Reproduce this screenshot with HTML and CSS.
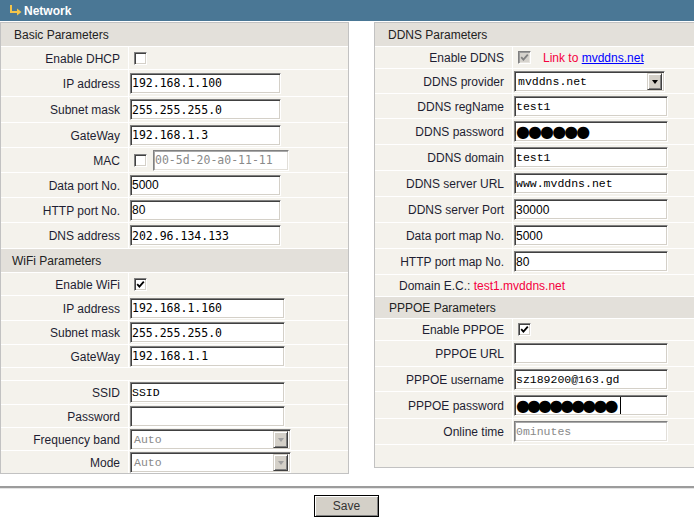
FILE: index.html
```html
<!DOCTYPE html>
<html>
<head>
<meta charset="utf-8">
<title>Network</title>
<link rel="stylesheet" href="styles.css">
</head>
<body>
<div class="titlebar">
  <svg class="ico" width="12" height="11" viewBox="0 0 12 11"><rect x="0" y="0" width="2" height="8" fill="#f3c44a"/><rect x="0" y="6" width="8" height="2" fill="#f3c44a"/><polygon points="7,3.5 11.5,7 7,10.5" fill="#f3c44a"/></svg>
  <span>Network</span>
</div>
<div class="panels">
  <section class="panel left">
    <div class="sec">Basic Parameters</div>
    <div class="lbl">Enable DHCP</div><div class="val"><span class="cb"></span></div>
    <div class="lbl">IP address</div><div class="val"><input class="tx w151 num" value="192.168.1.100"></div>
    <div class="lbl">Subnet mask</div><div class="val"><input class="tx w151 num" value="255.255.255.0"></div>
    <div class="lbl">GateWay</div><div class="val"><input class="tx w151 num" value="192.168.1.3"></div>
    <div class="lbl">MAC</div><div class="val"><span class="cb"></span><input class="tx w136 num dis mac" value="00-5d-20-a0-11-11" disabled></div>
    <div class="lbl">Data port No.</div><div class="val"><input class="tx w151 sans" value="5000"></div>
    <div class="lbl">HTTP port No.</div><div class="val"><input class="tx w151 sans" value="80"></div>
    <div class="lbl">DNS address</div><div class="val"><input class="tx w151 num" value="202.96.134.133"></div>
    <div class="sec sec2">WiFi Parameters</div>
    <div class="lbl">Enable WiFi</div><div class="val"><span class="cb on"><svg width="9" height="9" viewBox="0 0 9 9"><path d="M1.2 4.2 L3.4 6.6 L7.8 1.6" stroke="#000" stroke-width="1.8" fill="none"/></svg></span></div>
    <div class="lbl">IP address</div><div class="val"><input class="tx w155 num" value="192.168.1.160"></div>
    <div class="lbl">Subnet mask</div><div class="val"><input class="tx w155 num" value="255.255.255.0"></div>
    <div class="lbl">GateWay</div><div class="val"><input class="tx w155 num" value="192.168.1.1"></div>
    <div class="blank"></div>
    <div class="lbl">SSID</div><div class="val"><input class="tx w155 mono" value="SSID"></div>
    <div class="lbl">Password</div><div class="val"><input class="tx w155 mono" value=""></div>
    <div class="lbl">Frequency band</div><div class="val"><div class="combo w161 dis"><span class="ctext">Auto</span><span class="arr"><span class="tri"></span></span></div></div>
    <div class="lbl">Mode</div><div class="val"><div class="combo w161 dis"><span class="ctext">Auto</span><span class="arr"><span class="tri"></span></span></div></div>
  </section>
  <section class="panel right">
    <div class="sec">DDNS Parameters</div>
    <div class="lbl">Enable DDNS</div><div class="val"><span class="cb on dis"><svg width="9" height="9" viewBox="0 0 9 9"><path d="M1.2 4.2 L3.4 6.6 L7.8 1.6" stroke="#808080" stroke-width="1.8" fill="none"/></svg></span><span class="linkto">Link to <a href="#">mvddns.net</a></span></div>
    <div class="lbl">DDNS provider</div><div class="val"><div class="combo w151"><span class="ctext">mvddns.net</span><span class="arr"><span class="tri"></span></span></div></div>
    <div class="lbl">DDNS regName</div><div class="val"><input class="tx w154 mono" value="test1"></div>
    <div class="lbl">DDNS password</div><div class="val"><div class="tx fld w154 pw pw6">●●●●●●</div></div>
    <div class="lbl">DDNS domain</div><div class="val"><input class="tx w154 mono" value="test1"></div>
    <div class="lbl">DDNS server URL</div><div class="val"><input class="tx w154 mono" value="www.mvddns.net"></div>
    <div class="lbl">DDNS server Port</div><div class="val"><input class="tx w154 sans" value="30000"></div>
    <div class="lbl">Data port map No.</div><div class="val"><input class="tx w154 sans" value="5000"></div>
    <div class="lbl">HTTP port map No.</div><div class="val"><input class="tx w154 sans" value="80"></div>
    <div class="wide">Domain E.C.: <span class="red">test1.mvddns.net</span></div>
    <div class="sec sec3">PPPOE Parameters</div>
    <div class="lbl">Enable PPPOE</div><div class="val"><span class="cb on"><svg width="9" height="9" viewBox="0 0 9 9"><path d="M1.2 4.2 L3.4 6.6 L7.8 1.6" stroke="#000" stroke-width="1.8" fill="none"/></svg></span></div>
    <div class="lbl">PPPOE URL</div><div class="val"><input class="tx w154 mono" value=""></div>
    <div class="lbl">PPPOE username</div><div class="val"><input class="tx w154 mono" value="sz189200@163.gd"></div>
    <div class="lbl">PPPOE password</div><div class="val"><div class="tx fld w154 pw pw9">●●●●●●●●●<span class="caret"></span></div></div>
    <div class="lbl">Online time</div><div class="val"><input class="tx w154 mono dis" value="0minutes" disabled></div>
    <div class="blank"></div>
  </section>
</div>
<div class="rule"></div>
<div class="actions"><button class="btn" type="button">Save</button></div>
</body>
</html>
```

FILE: styles.css
```css
html, body {
  margin: 0;
  padding: 0;
  overflow: hidden;
  background: #fff;
}
body {
  width: 694px;
  height: 521px;
  font-family: "Liberation Sans", Arial, sans-serif;
  font-size: 12px;
  color: #1e1e32;
}
.titlebar {
  height: 21px;
  margin-bottom: 1px;
  background: #4a7795;
  color: #fff;
  font-weight: bold;
  font-size: 12px;
  display: flex;
  align-items: center;
  gap: 2px;
  padding-left: 10px;
}
.ico { display: block; }
.panels {
  display: flex;
  align-items: flex-start;
  gap: 25px;
}
.panel {
  display: grid;
  gap: 1px;
  background: #fff;
  border: 1px solid #c2c2c2;
  box-sizing: border-box;
}
.left {
  width: 349px;
  grid-template-columns: 127px 1fr;
  grid-template-rows: 23px 22px 26px 25px 24px 24px 24px 24px 25px 23px 22px 24px 23px 22px 12px 23px 22px 22px 22px;
}
.right {
  width: 320px;
  border-right: 0;
  grid-template-columns: 137px 1fr;
  grid-template-rows: 23px 21px 24px 24px 25px 25px 25px 25px 25px 25px 21px 21px 21px 25px 24px 26px 25px 22px;
}
.sec {
  grid-column: 1 / -1;
  background: #e3e0da;
  color: #222;
  display: flex;
  align-items: center;
  padding-left: 13px;
}
.sec2 { padding-left: 11px; }
.sec3 { padding-left: 14px; }
.lbl {
  background: #f4f2ec;
  display: flex;
  align-items: center;
  justify-content: flex-end;
  padding-right: 8px;
  padding-top: 1px;
  white-space: nowrap;
}
.val {
  background: #f4f2ec;
  display: flex;
  align-items: center;
  padding-left: 1px;
}
.blank {
  grid-column: 1 / -1;
  background: #f4f2ec;
}
.wide {
  grid-column: 1 / -1;
  background: #f4f2ec;
  display: flex;
  align-items: center;
  padding-left: 24px;
  white-space: pre;
}
.red { color: #f5003e; }
.linkto {
  margin-left: 12px;
  color: #f5003e;
}
.linkto a { color: #0000ff; text-decoration: underline; }

.tx {
  box-sizing: border-box;
  height: 21px;
  margin: 0;
  padding: 0 1px;
  background: #fff;
  color: #000;
  border: 1px solid;
  border-color: #808080 #ffffff #ffffff #808080;
  box-shadow: inset 1px 1px 0 #404040, inset -1px -1px 0 #d4d0c8;
  outline: none;
}
.mono { font: 11.5px "Liberation Mono", monospace; }
.num { font: 11.5px "DejaVu Sans Mono", monospace; }
.sans { font: 12px "Liberation Sans", Arial, sans-serif; }
.tx.dis {
  color: #8a8a8a;
  box-shadow: inset 1px 1px 0 #a8a8a8, inset -1px -1px 0 #e2dfd9;
}
.w136 { width: 136px; }
.w151 { width: 151px; }
.w154 { width: 154px; }
.w155 { width: 155px; }
.w161 { width: 161px; }
.mac { margin-left: 6px; }
.fld {
  display: flex;
  align-items: center;
}
.pw {
  font: 16px "DejaVu Sans", sans-serif;
  padding-left: 1px;
  overflow: hidden;
}
.pw6 { letter-spacing: -1.9px; }
.pw9 { letter-spacing: -2.9px; }
.caret {
  display: inline-block;
  width: 1px;
  height: 17px;
  background: #000;
  margin-left: 4px;
}

.cb {
  box-sizing: border-box;
  width: 13px;
  height: 13px;
  margin-left: 4px;
  background: #fff;
  border: 1px solid;
  border-color: #808080 #ffffff #ffffff #808080;
  box-shadow: inset 1px 1px 0 #404040, inset -1px -1px 0 #d4d0c8;
  display: flex;
  align-items: center;
  justify-content: center;
  flex: none;
}
.cb svg { display: block; }
.cb.dis {
  background: #d6d3cd;
  box-shadow: inset 1px 1px 0 #9a9a9a, inset -1px -1px 0 #e6e3dd;
}

.combo {
  box-sizing: border-box;
  height: 21px;
  display: flex;
  align-items: center;
  background: #fff;
  border: 1px solid;
  border-color: #808080 #ffffff #ffffff #808080;
  box-shadow: inset 1px 1px 0 #404040, inset -1px -1px 0 #d4d0c8;
  padding: 2px 2px 2px 3px;
  font: 11.5px "Liberation Mono", monospace;
  color: #000;
}
.combo.dis { color: #8a8a8a; }
.ctext { flex: 1; }
.arr {
  box-sizing: border-box;
  width: 15px;
  height: 17px;
  background: #d4d0c8;
  border: 1px solid;
  border-color: #d4d0c8 #404040 #404040 #d4d0c8;
  box-shadow: inset 1px 1px 0 #fff, inset -1px -1px 0 #808080;
  display: flex;
  align-items: center;
  justify-content: center;
}
.tri {
  width: 0;
  height: 0;
  border-left: 3.5px solid transparent;
  border-right: 3.5px solid transparent;
  border-top: 4px solid #000;
  margin-top: 1px;
}
.combo.dis .tri { border-top-color: #a0a0a0; }

.rule {
  margin-top: 12px;
  height: 2px;
  background: #9c9c9c;
  border-bottom: 1px solid #e4e4e4;
}
.actions {
  display: flex;
  justify-content: center;
  padding-top: 6px;
}
.btn {
  box-sizing: border-box;
  width: 65px;
  height: 22px;
  margin: 0 1px 0 0;
  padding: 0;
  background: #d4d0c8;
  color: #333;
  font: 12px "Liberation Sans", Arial, sans-serif;
  border: 1px solid #000;
  box-shadow: inset 1px 1px 0 #fff, inset -1px -1px 0 #808080;
}
```
